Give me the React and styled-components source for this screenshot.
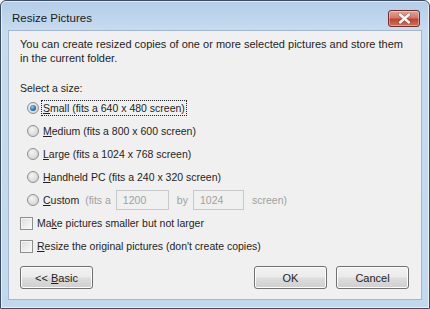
import React from 'react'
import styled, { createGlobalStyle } from 'styled-components'

const GlobalStyle = createGlobalStyle`
  html, body {
    margin: 0;
    padding: 0;
    background: #fff;
  }
  body {
    font-family: "Liberation Sans", Arial, sans-serif;
    font-size: 10.5px;
    color: #1e1e1e;
  }
`;

// the size options, in order
const sizes = [
  { key: 'S', rest: 'mall (fits a 640 x 480 screen)', checked: true },
  { key: 'M', rest: 'edium (fits a 800 x 600 screen)' },
  { key: 'L', rest: 'arge (fits a 1024 x 768 screen)' },
  { key: 'H', rest: 'andheld PC (fits a 240 x 320 screen)' },
];

function App() {
  return (
    <>
      <GlobalStyle />
      <Window>
        <TitleBar>
          <Title>Resize Pictures</Title>
          <CloseButton>
            <svg width="13" height="11" viewBox="0 0 13 11">
              <path d="M2 1.5 L11 9.5 M11 1.5 L2 9.5" stroke="#3a1010" strokeWidth="3.6" strokeLinecap="round" opacity="0.35" />
              <path d="M2 1.5 L11 9.5 M11 1.5 L2 9.5" stroke="#fff" strokeWidth="2.4" strokeLinecap="round" />
            </svg>
          </CloseButton>
        </TitleBar>
        <Body>
          <Intro>
            You can create resized copies of one or more selected pictures and store them in the current folder.
          </Intro>
          <Label>Select a size:</Label>
          <Options>
            {sizes.map((s) => (
              <Row key={s.key}>
                <Radio checked={s.checked} />
                <Text focused={s.checked}><u>{s.key}</u>{s.rest}</Text>
              </Row>
            ))}
            <Row>
              <Radio />
              <Text><u>C</u>ustom</Text>
              <Gray lead>(fits a</Gray>
              <Field w={53}>1200</Field>
              <Gray>by</Gray>
              <Field w={51}>1024</Field>
              <Gray>screen)</Gray>
            </Row>
          </Options>
          <Checks>
            <Row>
              <Check />
              <Text>Ma<u>k</u>e pictures smaller but not larger</Text>
            </Row>
            <Row>
              <Check />
              <Text><u>R</u>esize the original pictures (don't create copies)</Text>
            </Row>
          </Checks>
          <Footer>
            <Button><span>&lt;&lt; <u>B</u>asic</span></Button>
            <Spacer />
            <Button>OK</Button>
            <Button>Cancel</Button>
          </Footer>
        </Body>
      </Window>
    </>
  )
}

const Window = styled.div`
  width: 430px;
  height: 309px;
  box-sizing: border-box;
  display: flex;
  flex-direction: column;
  border: 1px solid #3c4d63;
  border-radius: 6px 6px 0 0;
  background: linear-gradient(to bottom, #b5cde8 0px, #c7dbf0 30px, #c2d8ee 100%);
  box-shadow: inset 0 0 0 1px rgba(255, 255, 255, 0.6);
  overflow: hidden;
`;

const TitleBar = styled.div`
  height: 29px;
  display: flex;
  align-items: center;
  padding: 0 9px 0 11px;
`;

const Title = styled.div`
  flex: 1;
  font-size: 11.5px;
  color: #1a1a1a;
  padding-top: 5px;
`;

const CloseButton = styled.div`
  width: 30px;
  height: 15px;
  margin-top: 5px;
  display: flex;
  align-items: center;
  justify-content: center;
  border: 1px solid #6d2f2f;
  border-radius: 3px;
  background: linear-gradient(to bottom, #e3a597 0%, #d2786a 45%, #c1432f 55%, #d0705c 100%);
  box-shadow: inset 0 0 0 1px rgba(255, 255, 255, 0.35);
`;

const Body = styled.div`
  flex: 1;
  margin: 0 7px 8px 7px;
  background: #f0f0f0;
  border: 1px solid #a3b8d0;
  padding: 6px 12px 0 11px;
  display: flex;
  flex-direction: column;
`;

const Intro = styled.p`
  margin: 0;
  line-height: 14px;
  font-size: 11px;
  padding-right: 4px;
`;

const Label = styled.div`
  margin-top: 16px;
  line-height: 14px;
`;

const Options = styled.div`
  display: flex;
  flex-direction: column;
  gap: 5px;
  margin-top: 4px;
  padding-left: 7px;
`;

const Checks = styled.div`
  display: flex;
  flex-direction: column;
  gap: 5px;
  margin-top: 5px;
`;

const Row = styled.div`
  height: 18px;
  display: flex;
  align-items: center;
`;

const Radio = styled.span`
  width: 12px;
  height: 12px;
  border-radius: 50%;
  box-sizing: border-box;
  border: 1px solid #8e8f8f;
  background: radial-gradient(circle at 40% 35%, #f4f4f4 0%, #dcdcdc 60%, #c8c8c8 100%);
  margin-right: 2px;
  position: relative;
  flex-shrink: 0;

  &::after {
    content: '';
    display: ${(p) => (p.checked ? 'block' : 'none')};
    position: absolute;
    left: 2px;
    top: 2px;
    width: 6px;
    height: 6px;
    border-radius: 50%;
    background: radial-gradient(circle at 40% 35%, #8fd0f5 0%, #2a7dc4 50%, #10385f 100%);
  }
`;

const Check = styled.span`
  width: 13px;
  height: 13px;
  box-sizing: border-box;
  border: 1px solid #8e8f8f;
  background: linear-gradient(135deg, #dcdcdc 0%, #efefef 60%, #fbfbfb 100%);
  box-shadow: inset 0 0 0 1px #f4f4f4;
  margin-right: 2px;
  flex-shrink: 0;
`;

const Text = styled.span`
  padding: 1px 1px;
  border: 1px dotted ${(p) => (p.focused ? '#222' : 'transparent')};
  white-space: nowrap;
`;

const Gray = styled.span`
  color: #a0a0a0;
  white-space: nowrap;
  margin-left: ${(p) => (p.lead ? '4px' : '0')};
`;

const Field = styled.span`
  width: ${(p) => p.w}px;
  height: 20px;
  box-sizing: border-box;
  border: 1px solid #c8c8c8;
  background: #f0f0f0;
  color: #a0a0a0;
  display: flex;
  align-items: center;
  padding-left: 6px;
  margin: 0 8px 0 5px;
`;

const Footer = styled.div`
  display: flex;
  gap: 9px;
  margin-top: 11px;
`;

const Spacer = styled.div`
  flex: 1;
`;

const Button = styled.button`
  width: 73px;
  height: 23px;
  font-family: inherit;
  font-size: 11px;
  color: #1e1e1e;
  border: 1px solid #707070;
  border-radius: 3px;
  background: linear-gradient(to bottom, #f2f2f2 0%, #ebebeb 48%, #dddddd 52%, #cfcfcf 100%);
  box-shadow: inset 0 0 0 1px #fcfcfc;
  padding: 0;
`;

export default App
